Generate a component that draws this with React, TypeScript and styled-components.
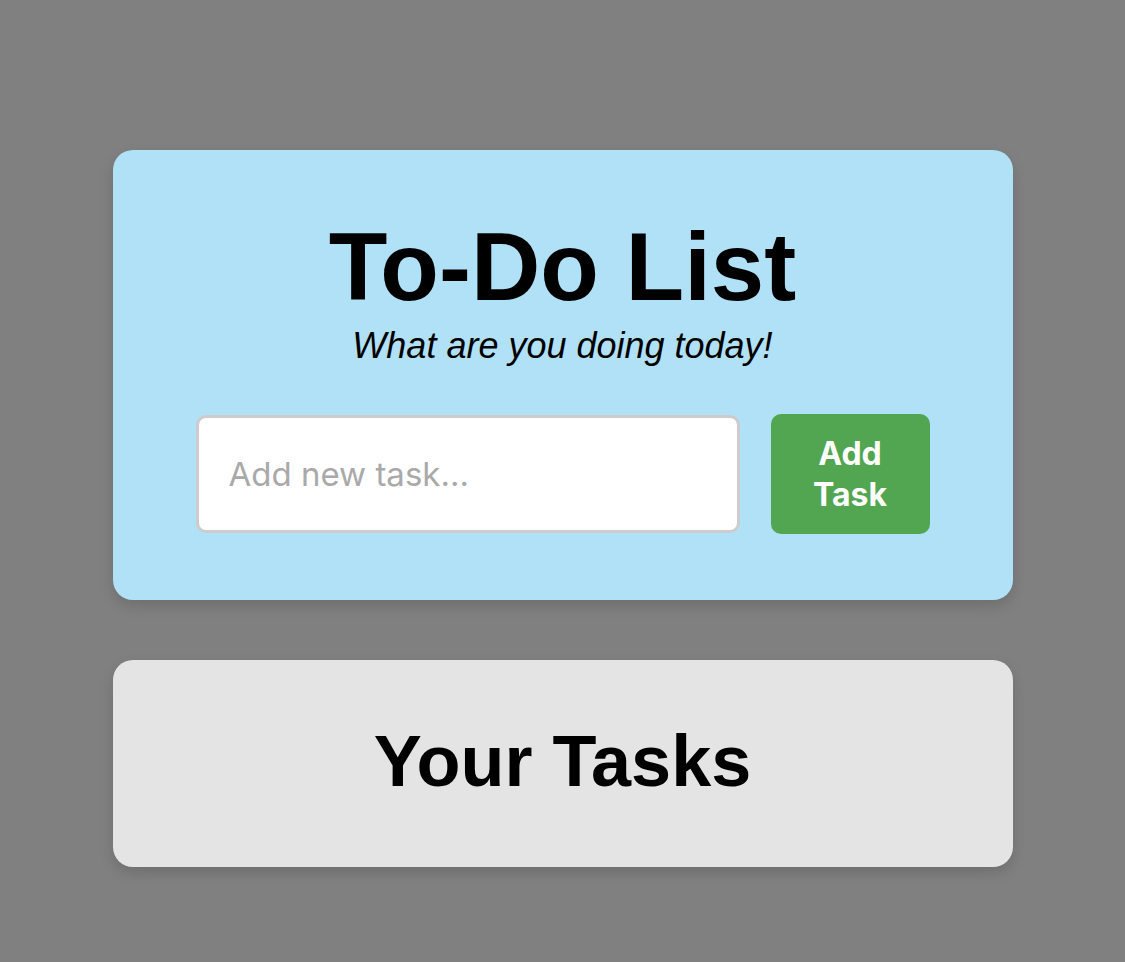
import React from "react";
import styled, { createGlobalStyle } from "styled-components";

const Global = createGlobalStyle`
  html, body {
    margin: 0;
    padding: 0;
    background: #808080;
  }
  body {
    font-family: "Liberation Sans", Arial, sans-serif;
  }
  * { box-sizing: border-box; }
`;

const Page = styled.main`
  min-height: 962px;
  display: flex;
  flex-direction: column;
  align-items: center;
  padding-top: 150px;
  gap: 60px;
`;

const Card = styled.section<{ $bg: string }>`
  width: 900px;
  background: ${(p) => p.$bg};
  border-radius: 20px;
  box-shadow: 0 6px 14px rgba(0, 0, 0, 0.14);
  display: flex;
  flex-direction: column;
  align-items: center;
`;

const HeaderCard = styled(Card)`
  padding: 69px 0 66px;
`;

const TasksCard = styled(Card)`
  padding: 65px 0 70px;
`;

const Title = styled.h1`
  margin: 0;
  font-family: "Liberation Sans", Arial, sans-serif;
  font-weight: 700;
  font-size: 96px;
  line-height: 96px;
  color: #000;
`;

const Subtitle = styled.p`
  margin: 13px 0 0;
  font-family: "Liberation Sans", Arial, sans-serif;
  font-style: italic;
  font-size: 36px;
  line-height: 36px;
  color: #000;
`;

const Row = styled.form`
  margin-top: 50px;
  display: flex;
  align-items: center;
  gap: 31px;
`;

const TaskInput = styled.input`
  width: 544px;
  height: 118px;
  border: 3px solid #cccccc;
  border-radius: 10px;
  background: #fff;
  padding: 0 30px;
  font-family: Inter, "Liberation Sans", sans-serif;
  font-size: 33px;
  color: #222;
  outline: none;
  &::placeholder {
    color: #a9a9a9;
  }
`;

const AddButton = styled.button`
  width: 159px;
  height: 120px;
  border: none;
  border-radius: 10px;
  background: #52a652;
  color: #fff;
  font-family: Inter, "Liberation Sans", sans-serif;
  font-weight: 700;
  font-size: 32px;
  line-height: 41px;
  padding: 0 16px;
  cursor: pointer;
`;

const SectionTitle = styled.h2`
  margin: 0;
  font-family: "Liberation Sans", Arial, sans-serif;
  font-weight: 700;
  font-size: 72px;
  line-height: 72px;
  color: #000;
`;

export default function App() {
  return (
    <>
      <Global />
      <Page>
        <HeaderCard $bg="#b0e1f6">
          <Title>To-Do List</Title>
          <Subtitle>What are you doing today!</Subtitle>
          <Row onSubmit={(e) => e.preventDefault()}>
            <TaskInput type="text" placeholder="Add new task..." />
            <AddButton type="submit">Add Task</AddButton>
          </Row>
        </HeaderCard>
        <TasksCard $bg="#e4e4e4">
          <SectionTitle>Your Tasks</SectionTitle>
        </TasksCard>
      </Page>
    </>
  );
}
